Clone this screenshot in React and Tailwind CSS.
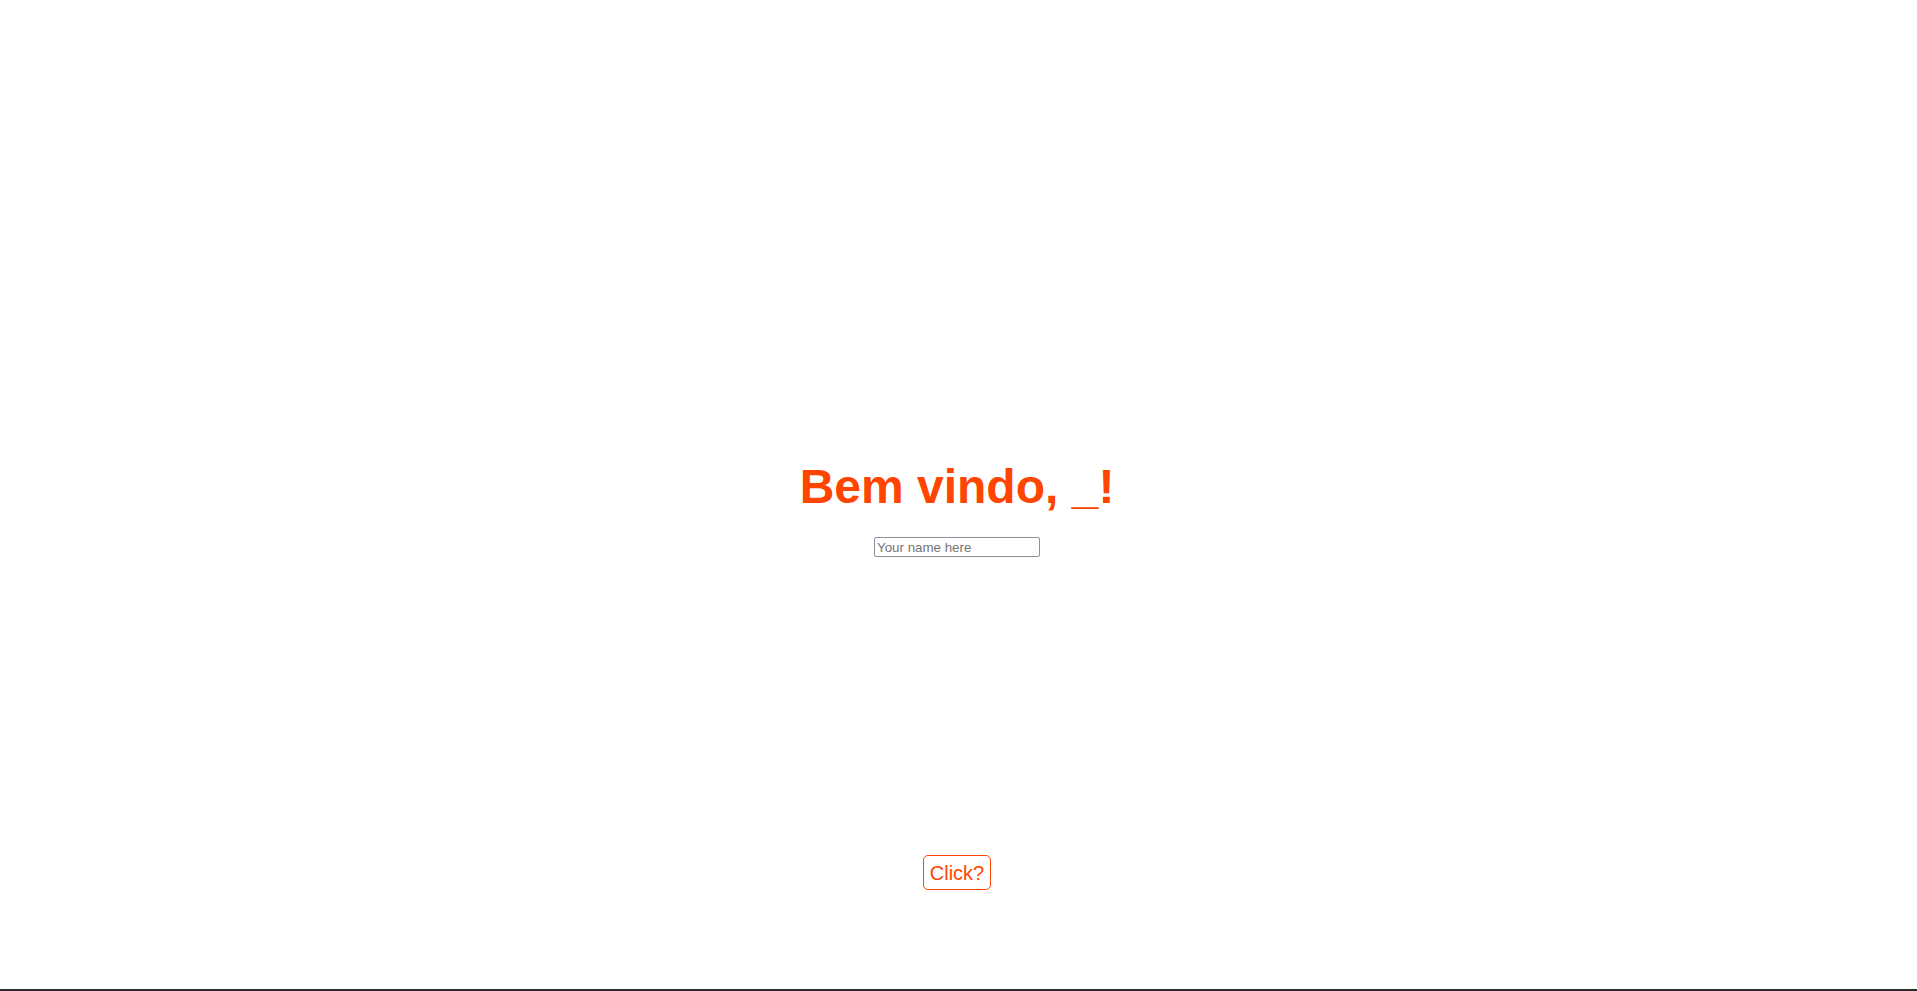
import React, { useState } from 'react'

export default function App() {
  const [name, setName] = useState('')

  return (
    <div className="flex min-h-[991px] flex-col bg-white font-['Liberation_Sans',Arial,sans-serif]">
      <main className="flex flex-1 flex-col items-center pr-[3px]">
        <h1 className="mt-[459px] text-[48px] font-bold leading-[56px] text-[#ff4500]">
          Bem vindo, {name || '_'}!
        </h1>
        <input
          type="text"
          value={name}
          onChange={(e) => setName(e.target.value)}
          placeholder="Your name here"
          className="mt-[22px] h-[20px] w-[166px] rounded-[2px] border border-[#8f8f9d] px-[2px] text-[13.33px] text-black placeholder:text-[#757575] outline-none"
        />
        <button className="mt-auto mb-[99px] h-[35px] w-[68px] rounded-[5px] border border-[#ff4500] bg-white text-[20px] text-[#ff4500]">
          Click?
        </button>
      </main>
      <div className="h-[2px] bg-[#2b2b2b]" />
    </div>
  )
}
